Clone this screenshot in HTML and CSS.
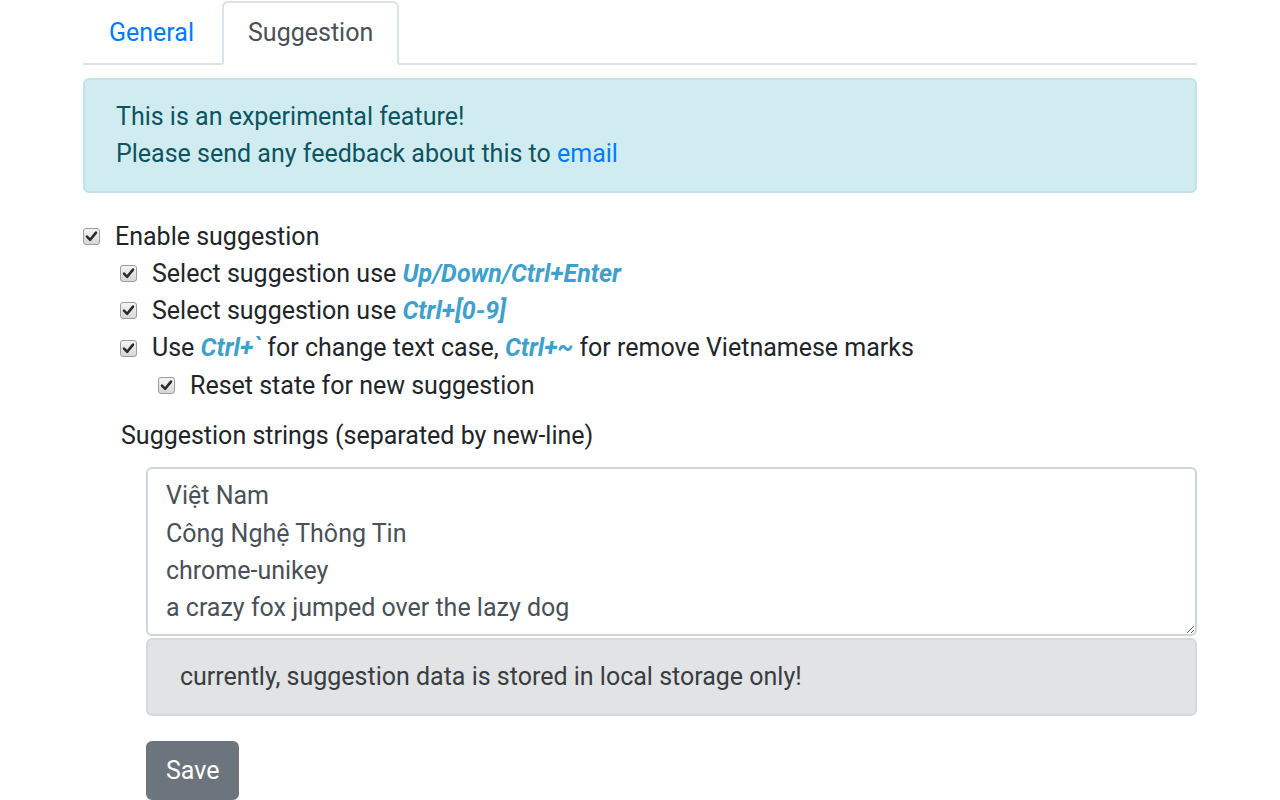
FILE: index.html
```html
<!DOCTYPE html>
<html>
<head>
<meta charset="utf-8">
<link rel="stylesheet" href="styles.css">
</head>
<body>
<div class="page">
  <ul class="tabs">
    <li class="tab"><a class="tab-link">General</a></li>
    <li class="tab"><a class="tab-link active">Suggestion</a></li>
  </ul>

  <div class="alert">
    <div>This is an experimental feature!</div>
    <div>Please send any feedback about this to <a class="link">email</a></div>
  </div>

  <div class="check">
    <span class="box"><svg viewBox="0 0 17 17" width="17" height="17"><path d="M4 8.6 L7.2 11.8 L13 4.6" fill="none" stroke="#2b2b2b" stroke-width="2.6" stroke-linecap="round" stroke-linejoin="round"/></svg></span>
    <span>Enable suggestion</span>
  </div>
  <div class="nest">
    <div class="check">
      <span class="box"><svg viewBox="0 0 17 17" width="17" height="17"><path d="M4 8.6 L7.2 11.8 L13 4.6" fill="none" stroke="#2b2b2b" stroke-width="2.6" stroke-linecap="round" stroke-linejoin="round"/></svg></span>
      <span>Select suggestion use <b class="key">Up/Down/Ctrl+Enter</b></span>
    </div>
    <div class="check">
      <span class="box"><svg viewBox="0 0 17 17" width="17" height="17"><path d="M4 8.6 L7.2 11.8 L13 4.6" fill="none" stroke="#2b2b2b" stroke-width="2.6" stroke-linecap="round" stroke-linejoin="round"/></svg></span>
      <span>Select suggestion use <b class="key">Ctrl+[0-9]</b></span>
    </div>
    <div class="check">
      <span class="box"><svg viewBox="0 0 17 17" width="17" height="17"><path d="M4 8.6 L7.2 11.8 L13 4.6" fill="none" stroke="#2b2b2b" stroke-width="2.6" stroke-linecap="round" stroke-linejoin="round"/></svg></span>
      <span>Use <b class="key">Ctrl+`</b> for change text case, <b class="key">Ctrl+~</b> for remove Vietnamese marks</span>
    </div>
    <div class="nest nest2">
      <div class="check">
        <span class="box"><svg viewBox="0 0 17 17" width="17" height="17"><path d="M4 8.6 L7.2 11.8 L13 4.6" fill="none" stroke="#2b2b2b" stroke-width="2.6" stroke-linecap="round" stroke-linejoin="round"/></svg></span>
        <span>Reset state for new suggestion</span>
      </div>
    </div>
  </div>

  <div class="strings-label">Suggestion strings (separated by new-line)</div>
  <div class="strings">
    <textarea class="textarea" rows="4">Việt Nam
Công Nghệ Thông Tin
chrome-unikey
a crazy fox jumped over the lazy dog</textarea>
    <div class="note">currently, suggestion data is stored in local storage only!</div>
    <button class="btn">Save</button>
  </div>
</div>
</body>
</html>
```

FILE: styles.css
```css
* { box-sizing: border-box; }
html, body { margin: 0; padding: 0; background: #fff; }
body {
  font-family: Roboto, "Liberation Sans", Arial, sans-serif;
  font-size: 25px;
  line-height: 37.3px;
  color: #212529;
  overflow: hidden;
  height: 800px;
}
.page { padding: 1px 83px 0 83px; }

.tabs {
  list-style: none;
  margin: 0;
  padding: 0;
  display: flex;
  border-bottom: 2px solid #dee2e6;
}
.tab { margin-bottom: -2px; }
.tab-link {
  display: block;
  padding: 12px 24px;
  border: 2px solid transparent;
  border-radius: 6px 6px 0 0;
  color: #007bff;
  line-height: 36px;
}
.tab + .tab { margin-left: 2px; }
.tab-link.active {
  color: #495057;
  background: #fff;
  border-color: #dee2e6 #dee2e6 #fff;
}

.alert {
  margin-top: 13px;
  margin-bottom: 25px;
  padding: 18px 31px;
  background: #d1ecf1;
  border: 2px solid #bee5eb;
  border-radius: 6px;
  color: #0c5460;
}
.link { color: #007bff; text-decoration: none; }

.check { display: flex; align-items: center; }
.box {
  width: 17px;
  height: 17px;
  flex: none;
  margin-right: 15px;
  border: 1px solid #9c9c9c;
  border-radius: 3px;
  background: linear-gradient(#f4f4f4, #d6d6d6);
  display: flex;
  align-items: center;
  justify-content: center;
  overflow: hidden;
}
.box svg { display: block; margin: -1px; }
.nest { padding-left: 37px; }
.nest2 { padding-left: 38px; }
.key { color: #3ea0cc; font-style: italic; font-weight: 700; }

.strings-label { margin-top: 13px; padding-left: 38px; }
.strings { padding-left: 63px; margin-top: 13px; }
.textarea {
  display: block;
  width: 100%;
  height: 169px;
  padding: 8px 18px;
  font-family: inherit;
  font-size: 25px;
  line-height: 37.3px;
  color: #495057;
  border: 2px solid #ced4da;
  border-radius: 6px;
  resize: vertical;
  margin: 0;
}
.note {
  margin-top: 2px;
  padding: 18px 32px;
  background: #e2e3e5;
  border: 2px solid #d6d8db;
  border-radius: 6px;
  color: #383d41;
}
.btn {
  margin-top: 25px;
  padding: 9px 18px;
  font-family: inherit;
  font-size: 25px;
  line-height: 37px;
  color: #fff;
  background: #6c757d;
  border: 2px solid #6c757d;
  border-radius: 6px;
}
```
